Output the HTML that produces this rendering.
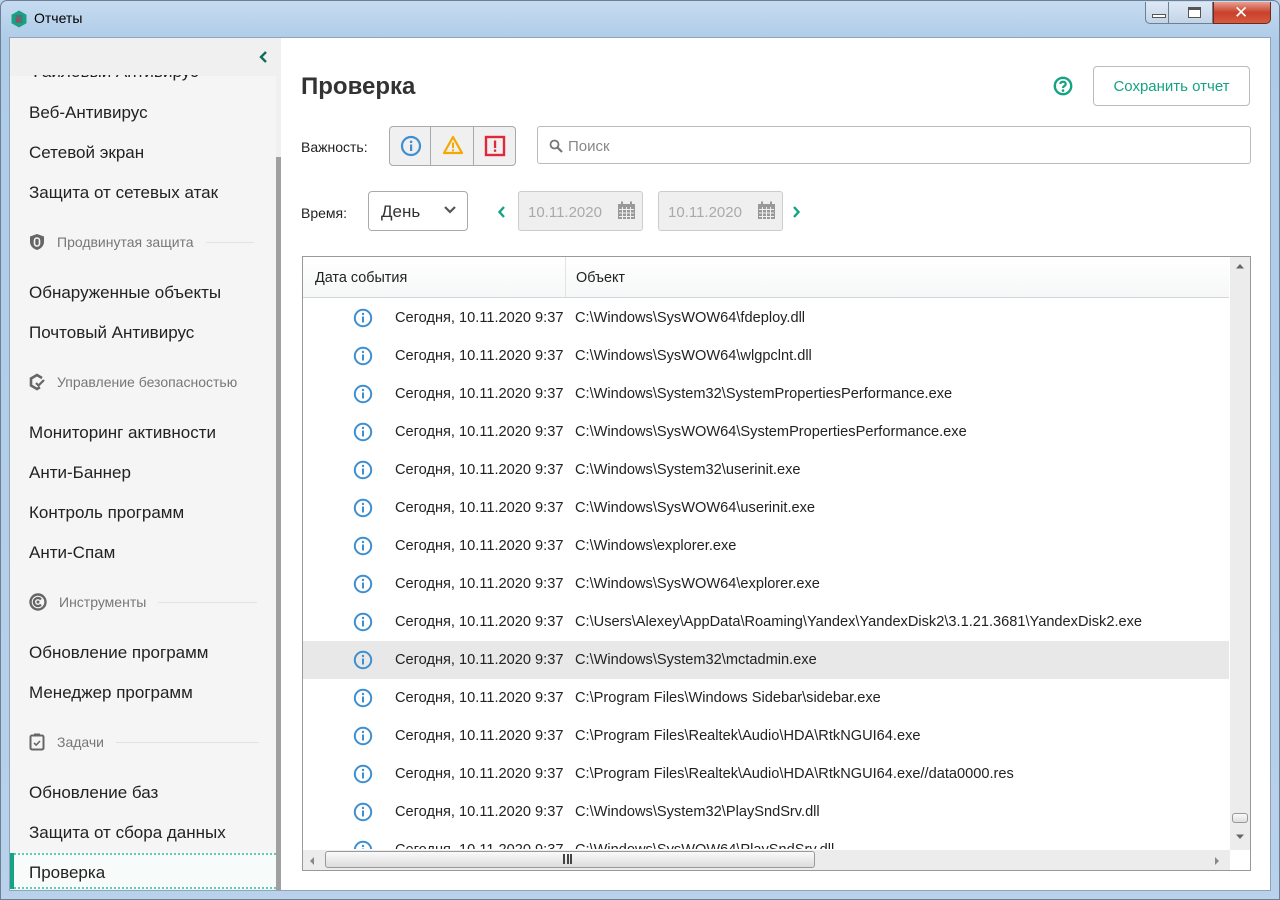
<!DOCTYPE html>
<html><head><meta charset="utf-8"><style>
*{margin:0;padding:0;box-sizing:border-box}
body{width:1280px;height:900px;overflow:hidden;font-family:"Liberation Sans","DejaVu Sans",sans-serif;background:#bcd3ea;position:relative;color:#222}
.a{position:absolute}
.frame{left:0;top:0;width:1280px;height:900px;background:linear-gradient(#c6dbf0,#aecbe8 40px,#b9d1ea);border:1px solid #6b7f95;border-radius:7px 7px 0 0}
.client{left:9px;top:37px;width:1262px;height:854px;background:#fff;border:1px solid #8ea4bb}
.side{left:10px;top:38px;width:266px;height:852px;background:#f5f5f5;overflow:hidden}
.sb{left:276px;top:38px;width:5px;height:852px;background:#f0f0f0}
.sbt{left:276px;top:157px;width:5px;height:733px;background:#a0a0a0}
.it{position:absolute;left:19px;font-size:17px;color:#222;white-space:nowrap}
.sec{position:absolute;left:19px;font-size:14px;color:#777;white-space:nowrap;display:flex;align-items:center}
.sec svg{margin-right:12px}
.sec i{display:block;height:1px;background:#e2e2e2;margin-left:12px}
.lbl{font-size:14px;color:#222}
.row{position:absolute;left:304px;width:925px;height:38px;font-size:14.6px;color:#222}
.row .ic{position:absolute;left:49px;top:8px}
.row .d{position:absolute;left:91px;top:10px}
.row .o{position:absolute;left:271px;top:10px;white-space:nowrap}
</style></head><body>
<div class="a frame"></div>
<svg class="a" style="left:10px;top:10px" width="18" height="18" viewBox="0 0 18 18"><path d="M9 0.5L16.5 4.8V13.2L9 17.5L1.5 13.2V4.8Z" fill="#14a383"/><rect x="5.5" y="5" width="7" height="8" fill="#5a6e7a"/><rect x="6.5" y="9" width="2" height="3" fill="#d33"/></svg>
<div class="a" style="left:34px;top:10px;font-size:14px;color:#000">Отчеты</div>
<div class="a" style="left:1145px;top:2px;width:68px;height:22px;border:1px solid #6b7f95;border-top:none;border-radius:0 0 0 5px;background:linear-gradient(#dfe9f5,#c3d4e7);"></div>
<div class="a" style="left:1168px;top:2px;width:1px;height:21px;background:#6b7f95"></div>
<div class="a" style="left:1152px;top:14px;width:14px;height:4px;border:1px solid #555;background:#fff"></div>
<div class="a" style="left:1188px;top:7px;width:13px;height:11px;border:1px solid #555;border-top-width:3px;background:#fff"></div>
<div class="a" style="left:1213px;top:2px;width:58px;height:22px;border:1px solid #6b2a20;border-top:none;border-radius:0 0 5px 0;background:linear-gradient(#e8a090,#c8412b 50%,#d65b3f)"></div>
<div class="a" style="left:1234px;top:3px;color:#fff;font-size:17px;font-weight:bold">✕</div>

<div class="a client"></div>
<div class="a side">
  <div class="a" style="left:0;top:0;width:266px;height:38px;background:#f0f0f0"></div>
  <svg class="a" style="left:249px;top:12px" width="10" height="14"><path d="M7 2L2 7L7 12" stroke="#0e6e5e" stroke-width="2.4" fill="none"/></svg>
  <div class="it" style="top:24px;clip-path:inset(13px 0 0 0)">Файловый Антивирус</div>
  <div class="it" style="top:65px">Веб-Антивирус</div>
  <div class="it" style="top:105px">Сетевой экран</div>
  <div class="it" style="top:145px">Защита от сетевых атак</div>
  <div class="sec" style="top:195px"><svg width="16" height="18" viewBox="0 0 16 18"><path d="M8 1L15 3.5V9C15 13 11.5 16 8 17C4.5 16 1 13 1 9V3.5Z" fill="#666"/><rect x="5.5" y="5" width="5" height="8" rx="2.5" fill="none" stroke="#f5f5f5" stroke-width="1.6"/></svg>Продвинутая защита<i style="width:48px"></i></div>
  <div class="it" style="top:245px">Обнаруженные объекты</div>
  <div class="it" style="top:285px">Почтовый Антивирус</div>
  <div class="sec" style="top:335px"><svg width="16" height="18" viewBox="0 0 16 18"><path d="M13 5L8 2L2 5.5V12.5L8 16L11 14.3" stroke="#666" stroke-width="2.6" fill="none"/><path d="M7 10L9.5 12.5L15 7" stroke="#666" stroke-width="2.2" fill="none"/></svg>Управление безопасностью</div>
  <div class="it" style="top:385px">Мониторинг активности</div>
  <div class="it" style="top:425px">Анти-Баннер</div>
  <div class="it" style="top:465px">Контроль программ</div>
  <div class="it" style="top:505px">Анти-Спам</div>
  <div class="sec" style="top:555px"><svg width="18" height="18" viewBox="0 0 18 18"><circle cx="9" cy="9" r="7.5" stroke="#666" stroke-width="2.4" fill="none"/><path d="M12 6.5A4 4 0 1 0 12 11.5" stroke="#666" stroke-width="2.2" fill="none"/><circle cx="9" cy="9" r="1.5" fill="#666"/></svg>Инструменты<i style="width:99px"></i></div>
  <div class="it" style="top:605px">Обновление программ</div>
  <div class="it" style="top:645px">Менеджер программ</div>
  <div class="sec" style="top:695px"><svg width="16" height="18" viewBox="0 0 16 18"><rect x="1.5" y="2.5" width="13" height="14" rx="1.5" stroke="#666" stroke-width="2" fill="none"/><rect x="5" y="0.5" width="6" height="3" fill="#666"/><path d="M5 10L7.2 12L11 8" stroke="#666" stroke-width="1.6" fill="none"/></svg>Задачи<i style="width:143px"></i></div>
  <div class="it" style="top:745px">Обновление баз</div>
  <div class="it" style="top:785px">Защита от сбора данных</div>
  <div class="a" style="left:0;top:815px;width:266px;height:36px;background:#f7fbfa;border-top:2px dotted #5fcab5;border-bottom:2px dotted #5fcab5"></div>
  <div class="a" style="left:0;top:815px;width:4px;height:36px;background:#14a383"></div>
  <div class="it" style="top:825px">Проверка</div>
</div>
<div class="a sb"></div><div class="a sbt"></div>

<div class="a" style="left:301px;top:73px;font-size:24px;font-weight:bold;color:#333">Проверка</div>
<svg class="a" style="left:1053px;top:76px" width="20" height="20" viewBox="0 0 20 20"><circle cx="10" cy="10" r="8.2" stroke="#14a383" stroke-width="2.4" fill="none"/><path d="M7.3 8C7.3 5 12.7 5 12.7 8C12.7 10 10 10 10 12" stroke="#14a383" stroke-width="2.2" fill="none"/><circle cx="10" cy="14.6" r="1.3" fill="#14a383"/></svg>
<div class="a" style="left:1093px;top:66px;width:157px;height:40px;border:1px solid #bbb;border-radius:4px;color:#14a383;font-size:15px;text-align:center;line-height:40px">Сохранить отчет</div>

<div class="a lbl" style="left:301px;top:139px">Важность:</div>
<div class="a" style="left:389px;top:126px;width:127px;height:40px;border:1px solid #aaa;border-radius:4px;background:#f0f0f0"></div>
<div class="a" style="left:430px;top:127px;width:1px;height:38px;background:#aaa"></div>
<div class="a" style="left:473px;top:127px;width:1px;height:38px;background:#aaa"></div>
<svg class="a" style="left:400px;top:135px" width="22" height="22" viewBox="0 0 22 22"><circle cx="11" cy="11" r="9" stroke="#3f8fd0" stroke-width="2.2" fill="none"/><rect x="10" y="9.5" width="2.2" height="6.5" fill="#3f8fd0"/><circle cx="11.1" cy="6.8" r="1.3" fill="#3f8fd0"/></svg>
<svg class="a" style="left:442px;top:135px" width="22" height="20" viewBox="0 0 22 20"><path d="M11 2L20 18H2Z" stroke="#f5a800" stroke-width="2.2" fill="none" stroke-linejoin="round"/><rect x="10" y="7.5" width="2" height="5.5" fill="#f5a800"/><rect x="10" y="14.3" width="2" height="2" fill="#f5a800"/></svg>
<svg class="a" style="left:484px;top:135px" width="22" height="22" viewBox="0 0 22 22"><rect x="2" y="2" width="18" height="18" stroke="#e0283a" stroke-width="2.4" fill="none"/><rect x="9.9" y="5.5" width="2.3" height="7.5" fill="#e0283a"/><rect x="9.9" y="14.5" width="2.3" height="2.3" fill="#e0283a"/></svg>
<div class="a" style="left:537px;top:126px;width:714px;height:38px;border:1px solid #bbb;border-radius:3px"></div>
<svg class="a" style="left:549px;top:139px" width="14" height="14" viewBox="0 0 14 14"><circle cx="5.5" cy="5.5" r="4" stroke="#777" stroke-width="1.8" fill="none"/><path d="M8.5 8.5L13 13" stroke="#777" stroke-width="2.2"/></svg>
<div class="a" style="left:568px;top:138px;font-size:15px;color:#888">Поиск</div>

<div class="a lbl" style="left:301px;top:205px">Время:</div>
<div class="a" style="left:368px;top:191px;width:100px;height:40px;border:1px solid #aaa;border-radius:4px"></div>
<div class="a" style="left:381px;top:202px;font-size:17px;color:#333">День</div>
<svg class="a" style="left:443px;top:205px" width="14" height="10"><path d="M2 2L7 7L12 2" stroke="#555" stroke-width="2.2" fill="none"/></svg>
<svg class="a" style="left:497px;top:205px" width="10" height="14"><path d="M7 2L2.5 7L7 12" stroke="#14a383" stroke-width="2.4" fill="none"/></svg>
<div class="a" style="left:518px;top:191px;width:125px;height:40px;border:1px solid #ccc;border-radius:3px;background:#efefef"></div>
<div class="a" style="left:528px;top:204px;font-size:15px;color:#aaa">10.11.2020</div>
<div class="a" style="left:658px;top:191px;width:125px;height:40px;border:1px solid #ccc;border-radius:3px;background:#efefef"></div>
<div class="a" style="left:668px;top:204px;font-size:15px;color:#aaa">10.11.2020</div>
<svg class="a" style="left:617px;top:201px" width="19" height="19" viewBox="0 0 19 19"><rect x="1" y="3" width="17" height="15" fill="#999"/><rect x="4" y="0.5" width="2" height="4" fill="#999"/><rect x="13" y="0.5" width="2" height="4" fill="#999"/><path d="M2 8.5H17M2 12H17M2 15.5H17M5.5 6V18M9.5 6V18M13.5 6V18" stroke="#efefef" stroke-width="1"/></svg>
<svg class="a" style="left:757px;top:201px" width="19" height="19" viewBox="0 0 19 19"><rect x="1" y="3" width="17" height="15" fill="#999"/><rect x="4" y="0.5" width="2" height="4" fill="#999"/><rect x="13" y="0.5" width="2" height="4" fill="#999"/><path d="M2 8.5H17M2 12H17M2 15.5H17M5.5 6V18M9.5 6V18M13.5 6V18" stroke="#efefef" stroke-width="1"/></svg>
<svg class="a" style="left:791px;top:205px" width="10" height="14"><path d="M3 2L7.5 7L3 12" stroke="#14a383" stroke-width="2.4" fill="none"/></svg>

<div class="a" style="left:302px;top:256px;width:949px;height:615px;border:1px solid #999;background:#fff;overflow:hidden">
  <div class="a" style="left:0;top:0;width:926px;height:41px;background:linear-gradient(#fff,#f6f7f8);border-bottom:1px solid #d5d5d5"></div>
  <div class="a" style="left:262px;top:0;width:1px;height:40px;background:#e3e3e3"></div>
  <div class="a" style="left:12px;top:13px;font-size:14.4px">Дата события</div>
  <div class="a" style="left:273px;top:13px;font-size:14.4px">Объект</div>
  <div class="a" style="left:927px;top:0;width:20px;height:593px;background:#ececec"></div>
  <svg class="a" style="left:932px;top:6px" width="10" height="6"><path d="M1 5.5L5 1L9 5.5Z" fill="#666"/></svg>
  <div class="a" style="left:929px;top:556px;width:16px;height:10px;border:1px solid #999;border-radius:3px;background:linear-gradient(#fafafa,#ddd)"></div>
  <svg class="a" style="left:932px;top:577px" width="10" height="6"><path d="M1 0.5L5 5L9 0.5Z" fill="#666"/></svg>
  <div class="a" style="left:0;top:593px;width:927px;height:20px;background:#ececec"></div>
  <svg class="a" style="left:6px;top:599px" width="6" height="10"><path d="M5 1L1 5L5 9Z" fill="#888"/></svg>
  <svg class="a" style="left:911px;top:599px" width="6" height="10"><path d="M1 1L5 5L1 9Z" fill="#888"/></svg>
  <div class="a" style="left:22px;top:594px;width:490px;height:17px;border:1px solid #999;border-radius:3px;background:linear-gradient(#fafafa,#dcdcdc)"></div>
  <div class="a" style="left:260px;top:597px;width:9px;height:10px;border-left:2px solid #444;border-right:2px solid #444"><div style="margin-left:1.5px;width:2px;height:10px;background:#444"></div></div>
</div>
<div class="a" style="left:303px;top:298px;width:926px;height:551px;overflow:hidden" id="rows">
<div style="position:absolute;left:0;top:343px;width:926px;height:38px;background:#e8e8e8"></div>
</div>
<script>
var items=["C:\\Windows\\SysWOW64\\fdeploy.dll","C:\\Windows\\SysWOW64\\wlgpclnt.dll","C:\\Windows\\System32\\SystemPropertiesPerformance.exe","C:\\Windows\\SysWOW64\\SystemPropertiesPerformance.exe","C:\\Windows\\System32\\userinit.exe","C:\\Windows\\SysWOW64\\userinit.exe","C:\\Windows\\explorer.exe","C:\\Windows\\SysWOW64\\explorer.exe","C:\\Users\\Alexey\\AppData\\Roaming\\Yandex\\YandexDisk2\\3.1.21.3681\\YandexDisk2.exe","C:\\Windows\\System32\\mctadmin.exe","C:\\Program Files\\Windows Sidebar\\sidebar.exe","C:\\Program Files\\Realtek\\Audio\\HDA\\RtkNGUI64.exe","C:\\Program Files\\Realtek\\Audio\\HDA\\RtkNGUI64.exe//data0000.res","C:\\Windows\\System32\\PlaySndSrv.dll","C:\\Windows\\SysWOW64\\PlaySndSrv.dll"];
var h="";
var ic='<svg width="20" height="20" viewBox="0 0 20 20"><circle cx="10" cy="10" r="8.2" stroke="#3f8fd0" stroke-width="2" fill="none"/><rect x="9" y="8.5" width="2" height="6" fill="#3f8fd0"/><circle cx="10" cy="6" r="1.2" fill="#3f8fd0"/></svg>';
for(var i=0;i<items.length;i++){var o=document.createElement('div');o.textContent=items[i];h+='<div class="row" style="left:1px;top:'+(2+38*i)+'px"><div class="ic">'+ic+'</div><div class="d">Сегодня, 10.11.2020 9:37</div><div class="o">'+o.innerHTML+'</div></div>';}
document.getElementById('rows').insertAdjacentHTML('beforeend',h);
</script>
</body></html>
